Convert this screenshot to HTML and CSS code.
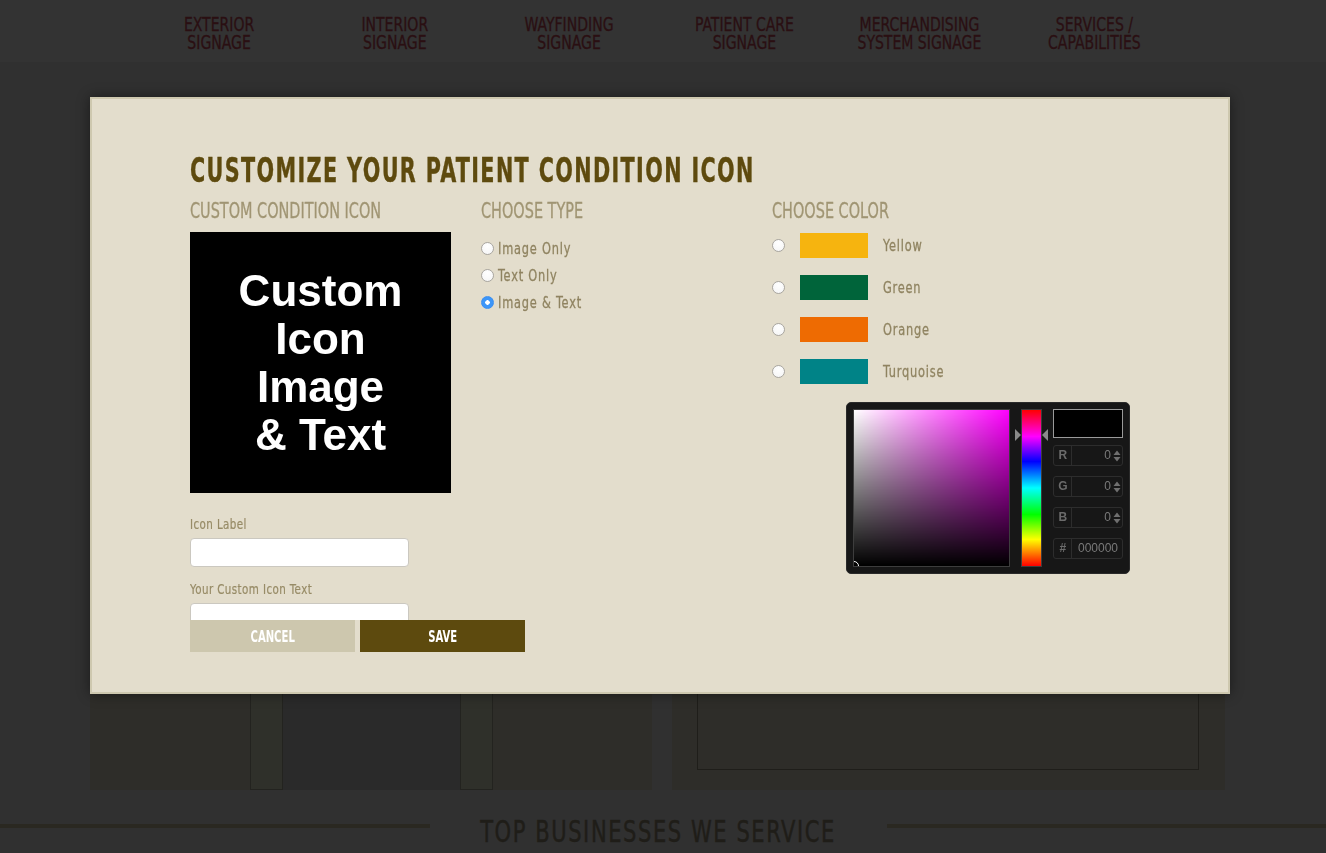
FILE: index.html
```html
<!DOCTYPE html>
<html lang="en">
<head>
<meta charset="utf-8">
<title>Customize Your Patient Condition Icon</title>
<link rel="stylesheet" href="styles.css">
</head>
<body>
<header class="topnav">
  <nav class="nav">
    <a class="nav-item"><span class="nav-text">EXTERIOR<br>SIGNAGE</span></a>
    <a class="nav-item"><span class="nav-text">INTERIOR<br>SIGNAGE</span></a>
    <a class="nav-item"><span class="nav-text">WAYFINDING<br>SIGNAGE</span></a>
    <a class="nav-item"><span class="nav-text">PATIENT CARE<br>SIGNAGE</span></a>
    <a class="nav-item"><span class="nav-text">MERCHANDISING<br>SYSTEM SIGNAGE</span></a>
    <a class="nav-item"><span class="nav-text">SERVICES /<br>CAPABILITIES</span></a>
  </nav>
</header>

<main class="page">
  <section class="panels">
    <div class="panel panel-left">
      <div class="pl-spacer"></div>
      <div class="post"></div>
      <div class="post-mid"></div>
      <div class="post"></div>
    </div>
    <div class="panel panel-right">
      <div class="inner-box"></div>
    </div>
  </section>
  <section class="biz">
    <span class="biz-rule biz-rule-left"></span>
    <h2 class="biz-title"><span class="biz-text">TOP BUSINESSES WE SERVICE</span></h2>
    <span class="biz-rule biz-rule-right"></span>
  </section>
</main>

<div class="modal">
  <h1 class="modal-title"><span class="modal-title-text">CUSTOMIZE YOUR PATIENT CONDITION ICON</span></h1>
  <div class="cols">
    <div class="col col-icon">
      <h3 class="col-head"><span class="col-head-text">CUSTOM CONDITION ICON</span></h3>
      <div class="icon-preview"><div class="icon-preview-text">Custom<br>Icon<br>Image<br>&amp; Text</div></div>
      <div class="fields">
        <label class="field-label"><span class="field-label-text">Icon Label</span></label>
        <input class="text-input" type="text">
        <label class="field-label field-label-2"><span class="field-label-text">Your Custom Icon Text</span></label>
        <input class="text-input" type="text">
      </div>
      <div class="buttons">
        <button class="btn btn-cancel"><span class="btn-text">CANCEL</span></button>
        <button class="btn btn-save"><span class="btn-text">SAVE</span></button>
      </div>
    </div>

    <div class="col col-type">
      <h3 class="col-head"><span class="col-head-text">CHOOSE TYPE</span></h3>
      <div class="type-list">
        <label class="type-row"><input class="radio" type="radio" name="type"><span class="opt-text">Image Only</span></label>
        <label class="type-row"><input class="radio" type="radio" name="type"><span class="opt-text">Text Only</span></label>
        <label class="type-row"><input class="radio" type="radio" name="type" checked><span class="opt-text">Image &amp; Text</span></label>
      </div>
    </div>

    <div class="col col-color">
      <h3 class="col-head"><span class="col-head-text">CHOOSE COLOR</span></h3>
      <div class="color-list">
        <label class="color-row"><input class="radio" type="radio" name="color"><span class="swatch swatch-yellow"></span><span class="opt-text">Yellow</span></label>
        <label class="color-row"><input class="radio" type="radio" name="color"><span class="swatch swatch-green"></span><span class="opt-text">Green</span></label>
        <label class="color-row"><input class="radio" type="radio" name="color"><span class="swatch swatch-orange"></span><span class="opt-text">Orange</span></label>
        <label class="color-row"><input class="radio" type="radio" name="color"><span class="swatch swatch-turquoise"></span><span class="opt-text">Turquoise</span></label>
      </div>
      <div class="picker">
        <div class="sv"><span class="sv-cursor"></span></div>
        <div class="hue-wrap">
          <div class="arrow-col"><span class="arrow arrow-right"></span></div>
          <div class="hue"></div>
          <div class="arrow-col"><span class="arrow arrow-left"></span></div>
        </div>
        <div class="pk-fields">
          <div class="pk-preview"></div>
          <div class="pk-field"><span class="pk-lab">R</span><span class="pk-val">0<svg class="spin" width="8" height="12" viewBox="0 0 8 12"><path d="M4 0.5 L7.5 5 L0.5 5 Z M0.5 7 L7.5 7 L4 11.5 Z" fill="#6f6f6f"/></svg></span></div>
          <div class="pk-field"><span class="pk-lab">G</span><span class="pk-val">0<svg class="spin" width="8" height="12" viewBox="0 0 8 12"><path d="M4 0.5 L7.5 5 L0.5 5 Z M0.5 7 L7.5 7 L4 11.5 Z" fill="#6f6f6f"/></svg></span></div>
          <div class="pk-field"><span class="pk-lab">B</span><span class="pk-val">0<svg class="spin" width="8" height="12" viewBox="0 0 8 12"><path d="M4 0.5 L7.5 5 L0.5 5 Z M0.5 7 L7.5 7 L4 11.5 Z" fill="#6f6f6f"/></svg></span></div>
          <div class="pk-field"><span class="pk-lab">#</span><span class="pk-val pk-hex">000000</span></div>
        </div>
      </div>
    </div>
  </div>
</div>
</body>
</html>
```

FILE: styles.css
```css
* { box-sizing: border-box; }

html, body { margin: 0; padding: 0; }

body {
  width: 1326px;
  height: 853px;
  overflow: hidden;
  background: #303030;
  font-family: "DejaVu Sans Condensed", "DejaVu Sans", sans-serif;
}

/* ---------- top navigation ---------- */
.topnav {
  height: 62px;
  background: #333333;
}

.nav {
  display: flex;
  width: 1050px;
  margin-left: 132px;
  padding-top: 15px;
}

.nav-item {
  width: 175px;
  text-align: center;
  color: #2a0f12;
  font-size: 20px;
  line-height: 18px;
  text-decoration: none;
  -webkit-text-stroke: 0.3px #2a0f12;
}

.nav-text {
  display: inline-block;
  transform: scaleX(0.78);
  transform-origin: center;
}

/* ---------- background page ---------- */
.panels {
  display: flex;
  gap: 20px;
  margin-top: 338px;
  padding-left: 90px;
  height: 390px;
}

.panel { background: #2e2d29; }

.panel-left {
  width: 562px;
  display: flex;
}

.pl-spacer { width: 160px; }

.post {
  width: 33px;
  background: #2f302a;
  border: 1px solid #23231f;
  border-top: none;
}

.post-mid {
  width: 177px;
  background: #2a2a2a;
}

.panel-right {
  width: 553px;
  display: flex;
  flex-direction: column;
  padding: 0 26px 20px 25px;
}

.inner-box {
  flex: 1;
  border: 1px solid #1f1e1a;
}

.biz {
  display: flex;
  align-items: flex-start;
  margin-top: 24px;
}

.biz-rule {
  height: 4px;
  margin-top: 10px;
  background: #2a2821;
}

.biz-rule-left { width: 430px; }
.biz-rule-right { flex: 1; }

.biz-title {
  width: 457px;
  margin: 0;
  text-align: center;
  font-size: 30px;
  line-height: 36px;
  font-weight: normal;
  letter-spacing: 2px;
  color: #1f1d18;
  -webkit-text-stroke: 0.4px #1f1d18;
  white-space: nowrap;
}

.biz-text {
  display: inline-block;
  transform: scaleX(0.78);
  transform-origin: center;
}

/* ---------- modal ---------- */
.modal {
  position: fixed;
  left: 90px;
  top: 97px;
  width: 1140px;
  background: #e3ddcc;
  border: 2px solid #cec8af;
  box-shadow: 0 0 12px rgba(0, 0, 0, 0.45);
  padding: 54px 0 40px 98px;
}

.modal-title {
  margin: 0 0 13px;
  font-size: 34px;
  line-height: 34px;
  font-weight: bold;
  letter-spacing: 2px;
  color: #5e4a0e;
  -webkit-text-stroke: 0.4px #5e4a0e;
  white-space: nowrap;
}

.modal-title-text {
  display: inline-block;
  transform: scaleX(0.678);
  transform-origin: left center;
}

.cols { display: flex; }

.col-icon, .col-type { width: 291px; flex: none; }
.col-color { flex: 1; }

.col-head {
  margin: 0 0 10px;
  font-size: 22px;
  line-height: 22px;
  font-weight: normal;
  color: #a09573;
  -webkit-text-stroke: 0.3px #a09573;
  white-space: nowrap;
}

.col-head-text {
  display: inline-block;
  transform: scaleX(0.73);
  transform-origin: left center;
}

/* icon preview */
.icon-preview {
  width: 261px;
  height: 261px;
  background: #000;
  display: flex;
  align-items: center;
  justify-content: center;
}

.icon-preview-text {
  font-family: "Liberation Sans", Arial, sans-serif;
  font-weight: bold;
  font-size: 44px;
  line-height: 48px;
  color: #fff;
  text-align: center;
}

/* fields */
.fields {
  height: 104px;
  margin-top: 23px;
  overflow: hidden;
}

.field-label {
  display: block;
  font-size: 14px;
  line-height: 16px;
  letter-spacing: 0.5px;
  color: #978b66;
  -webkit-text-stroke: 0.2px #978b66;
  margin-bottom: 6px;
  white-space: nowrap;
}

.field-label-2 { margin-top: 14px; }

.field-label-text {
  display: inline-block;
  transform: scaleX(0.82);
  transform-origin: left center;
}

.text-input {
  display: block;
  width: 219px;
  height: 29px;
  margin: 0;
  border: 1px solid #cbc8c0;
  border-radius: 4px;
  background: #fff;
}

/* buttons */
.buttons {
  display: flex;
  gap: 5px;
}

.btn {
  flex: none;
  width: 165px;
  height: 32px;
  border: none;
  padding: 0;
  margin: 0;
  font-family: "DejaVu Sans Condensed", "DejaVu Sans", sans-serif;
  font-weight: bold;
  font-size: 16px;
  color: #fff;
}

.btn-text {
  display: inline-block;
  transform: scaleX(0.7);
}

.btn-cancel { background: #cdc7ae; }
.btn-save { background: #5d4a0e; }

/* radios */
.radio {
  -webkit-appearance: none;
  appearance: none;
  width: 13px;
  height: 13px;
  margin: 0;
  border-radius: 50%;
  border: 1px solid #a9a6a0;
  background: radial-gradient(circle at 50% 30%, #ffffff 0%, #f4f4f4 100%);
  flex: none;
}

.radio:checked {
  border-color: #3a8ff2;
  background: radial-gradient(circle, #ffffff 0 2px, #3d96f8 2.5px);
}

.opt-text {
  display: inline-block;
  font-size: 16px;
  letter-spacing: 1px;
  color: #8f8360;
  -webkit-text-stroke: 0.3px #8f8360;
  transform: scaleX(0.79);
  transform-origin: left center;
  white-space: nowrap;
}

.type-list { margin-top: 13px; }

.type-row {
  display: flex;
  align-items: center;
  height: 27px;
}

.type-row .radio { margin-right: 4px; }

/* negative margin collapses with the heading's 10px bottom margin -> 2px gap */
.color-list { margin-top: -8px; }

.color-row {
  display: flex;
  align-items: center;
  height: 42px;
}

.color-row .radio { margin-right: 15px; }

.swatch {
  width: 68px;
  height: 25px;
  margin-right: 15px;
  flex: none;
}

.swatch-yellow { background: #f6b40f; }
.swatch-green { background: #00643a; }
.swatch-orange { background: #ee6b02; }
.swatch-turquoise { background: #008387; }

/* color picker */
.picker {
  width: 284px;
  height: 172px;
  margin: 10px 0 0 74px;
  padding: 6px;
  display: flex;
  align-items: flex-start;
  background: #171717;
  border: 1px solid #2a2a2a;
  border-radius: 5px;
}

.sv {
  position: relative;
  width: 158px;
  height: 158px;
  overflow: hidden;
  border: 1px solid #3d3d3d;
  background:
    linear-gradient(to top, #000 0%, rgba(0, 0, 0, 0) 100%),
    linear-gradient(to right, #fff 0%, #ff00ff 100%);
}

.sv-cursor {
  position: absolute;
  left: -5px;
  bottom: -5px;
  width: 10px;
  height: 10px;
  border: 1px solid #fff;
  border-radius: 50%;
}

.hue-wrap {
  display: flex;
  margin-left: 4px;
}

.arrow-col {
  width: 7px;
  padding-top: 20px;
}

.arrow {
  display: block;
  width: 0;
  height: 0;
  border-top: 6px solid transparent;
  border-bottom: 6px solid transparent;
}

.arrow-right { border-left: 6px solid #8a8a8a; margin-left: 1px; }
.arrow-left { border-right: 6px solid #8a8a8a; }

.hue {
  width: 21px;
  height: 158px;
  border: 1px solid #3d3d3d;
  background: linear-gradient(to bottom,
    #ff0000 0%, #ff00ff 17%, #0000ff 33%, #00ffff 50%,
    #00ff00 67%, #ffff00 83%, #ff0000 100%);
}

.pk-fields {
  width: 70px;
  margin-left: 4px;
}

.pk-preview {
  height: 29px;
  background: #000;
  border: 1px solid #9a9a9a;
  margin-bottom: 7px;
}

.pk-field {
  display: flex;
  height: 21px;
  margin-bottom: 10px;
  border: 1px solid #2d2d2d;
  border-radius: 3px;
  font-family: "Liberation Sans", Arial, sans-serif;
  font-size: 12px;
  line-height: 19px;
}

.pk-lab {
  width: 18px;
  flex: none;
  text-align: center;
  font-weight: bold;
  color: #6b6b6b;
  border-right: 1px solid #2d2d2d;
}

.pk-val {
  flex: 1;
  display: flex;
  align-items: center;
  justify-content: flex-end;
  color: #7a7a7a;
  padding-right: 1px;
}

.spin { margin-left: 2px; }

.pk-hex { padding-right: 4px; }
```
